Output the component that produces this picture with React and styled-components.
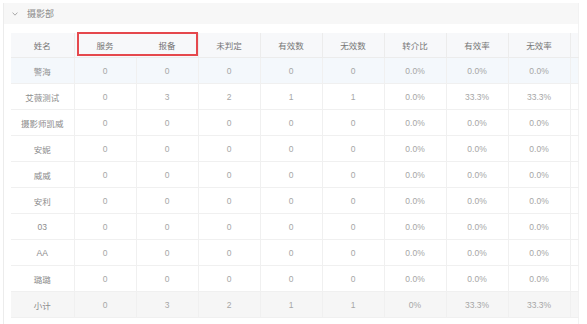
import React from "react";
import styled, { createGlobalStyle } from "styled-components";

const Global = createGlobalStyle`
  html, body { margin: 0; padding: 0; background: #fff; }
  body { font-family: "Liberation Sans", "Noto Sans CJK SC", sans-serif; }
`;

const Panel = styled.div`
  margin: 3px 0 0 3px;
  width: 576px;
  border-left: 1px solid #ececec;
  border-right: 1px solid #f2f2f2;
  height: 321px;
  box-sizing: border-box;
`;

const HeaderBar = styled.div`
  height: 21px;
  background: #f7f7f7;
  display: flex;
  align-items: center;
  padding-left: 8px;
  gap: 9px;
  color: #8c8c8c;
  font-size: 9px;
`;

const Chevron = styled.svg`
  width: 6px;
  height: 4px;
  flex: none;
`;

const Body = styled.div`
  padding: 9px 0 0 7px;
`;

const TableWrap = styled.div`
  position: relative;
  width: 567px;
`;

const Table = styled.table`
  border-collapse: collapse;
  table-layout: fixed;
  width: 567px;
  font-size: 8.5px;
  border-bottom: 1px solid #ececec;
`;

const Th = styled.th`
  height: 24px;
  padding: 0;
  font-weight: normal;
  color: #767676;
  background: #f7f8fa;
  border-right: 1px solid ${(p) => (p.$plain ? "transparent" : "#ececec")};
  border-bottom: 1px solid #ececec;
  text-align: center;
`;

const Row = styled.tr`
  background: ${(p) => (p.$tone === "hover" ? "#f4f8fc" : p.$tone === "sum" ? "#f6f6f6" : "#fff")};
`;

const Td = styled.td`
  height: 26px;
  padding: 0;
  box-sizing: border-box;
  text-align: center;
  color: ${(p) => (p.$name ? "#8c8c8c" : "#a6a6a6")};
  border-right: 1px solid ${(p) => (p.$gutter ? "transparent" : "#f0f0f0")};
  border-bottom: 1px solid #f0f0f0;
`;

const Highlight = styled.div`
  position: absolute;
  left: 66px;
  top: -1px;
  width: 121px;
  height: 24px;
  border: 2px solid #e5484d;
  box-sizing: border-box;
  pointer-events: none;
`;

const headers = ["姓名", "服务", "报备", "未判定", "有效数", "无效数", "转介比", "有效率", "无效率"];

const rows = [
  ["警海", 0, 0, 0, 0, 0, "0.0%", "0.0%", "0.0%"],
  ["艾薇测试", 0, 3, 2, 1, 1, "0.0%", "33.3%", "33.3%"],
  ["摄影师凯威", 0, 0, 0, 0, 0, "0.0%", "0.0%", "0.0%"],
  ["安妮", 0, 0, 0, 0, 0, "0.0%", "0.0%", "0.0%"],
  ["威威", 0, 0, 0, 0, 0, "0.0%", "0.0%", "0.0%"],
  ["安利", 0, 0, 0, 0, 0, "0.0%", "0.0%", "0.0%"],
  ["03", 0, 0, 0, 0, 0, "0.0%", "0.0%", "0.0%"],
  ["AA", 0, 0, 0, 0, 0, "0.0%", "0.0%", "0.0%"],
  ["璐璐", 0, 0, 0, 0, 0, "0.0%", "0.0%", "0.0%"],
];
const total = ["小计", 0, 3, 2, 1, 1, "0%", "33.3%", "33.3%"];

export default function App() {
  return (
    <>
      <Global />
      <Panel>
        <HeaderBar>
          <Chevron viewBox="0 0 6 4">
            <path d="M0.6 0.6 L3 3.2 L5.4 0.6" fill="none" stroke="#a0a0a0" strokeWidth="0.9" />
          </Chevron>
          <span>摄影部</span>
        </HeaderBar>
        <Body>
          <TableWrap>
            <Table>
              <colgroup>
                <col style={{ width: 63 }} />
                {headers.slice(1).map((h) => (
                  <col key={h} style={{ width: 62 }} />
                ))}
                <col style={{ width: 8 }} />
              </colgroup>
              <thead>
                <tr>
                  {headers.map((h, i) => (
                    <Th key={h} $plain={i === 1}>{h}</Th>
                  ))}
                  <Th $plain />
                </tr>
              </thead>
              <tbody>
                {rows.map((r, i) => (
                  <Row key={r[0]} $tone={i === 0 ? "hover" : "normal"}>
                    {r.map((c, j) => (
                      <Td key={j} $name={j === 0}>{c}</Td>
                    ))}
                    <Td $gutter />
                  </Row>
                ))}
                <Row $tone="sum">
                  {total.map((c, j) => (
                    <Td key={j} $name={j === 0}>{c}</Td>
                  ))}
                  <Td $gutter />
                </Row>
              </tbody>
            </Table>
            <Highlight />
          </TableWrap>
        </Body>
      </Panel>
    </>
  );
}
